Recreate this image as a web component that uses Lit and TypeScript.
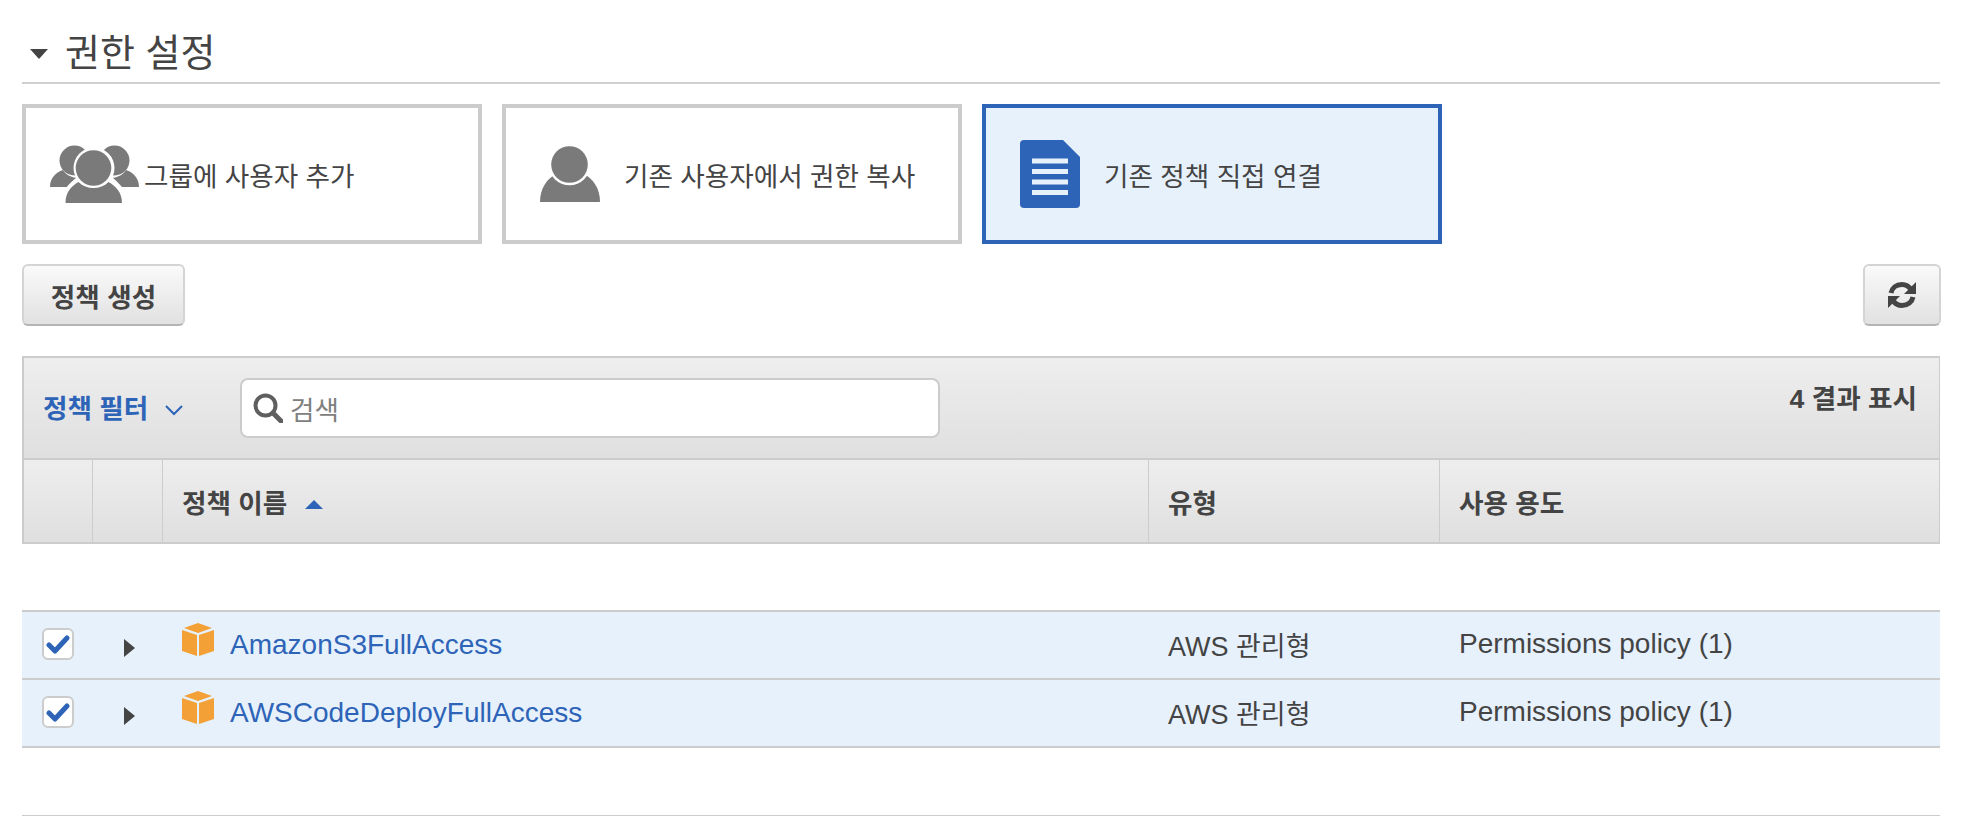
import { LitElement, html, css, svg } from "lit";
import { customElement } from "lit/decorators.js";

const groupIcon = html`<svg viewBox="0 0 90 58" width="90" height="58">
  <g fill="#7a7a7a">
    <circle cx="24.5" cy="15.5" r="15"/><circle cx="64.5" cy="15.5" r="15"/>
    <path d="M0 42c0-9 6-15 13-17 3 5 8 7 13 8-4 3-9 9-9 9z"/>
    <path d="M89 42c0-9-6-15-13-17-3 5-8 7-13 8 4 3 9 9 9 9z"/>
  </g>
  <circle cx="44" cy="23" r="20.5" fill="#fff"/>
  <path d="M12 58c0-12 6-20 16-25 8 9 24 9 32 0 10 5 16 13 16 25z" fill="#fff"/>
  <circle cx="43.5" cy="23" r="17.8" fill="#7a7a7a"/>
  <path d="M15.5 58c0-11 6-17 13-21 8 8 22 8 30 0 7 4 13.500 10 13.500 21z" fill="#7a7a7a"/>
</svg>`;

const userIcon = html`<svg viewBox="0 0 60 56" width="60" height="56">
  <path d="M0 56c0-14 7-23 16-28h28c9 5 16 14 16 28z" fill="#7a7a7a"/>
  <circle cx="29.500" cy="18.500" r="20.800" fill="#fff"/>
  <circle cx="29.500" cy="18.500" r="18.300" fill="#7a7a7a"/>
</svg>`;

const docIcon = html`<svg viewBox="0 0 60 68" width="60" height="68">
  <path d="M4 0h39l17 17v47a4 4 0 0 1-4 4H4a4 4 0 0 1-4-4V4a4 4 0 0 1 4-4z" fill="#2e64b7"/>
  <g fill="#e7f1fc">
    <rect x="12" y="18.500" width="36" height="5"/><rect x="12" y="29" width="36" height="5"/>
    <rect x="12" y="39.500" width="36" height="5"/><rect x="12" y="50" width="36" height="5"/>
  </g>
</svg>`;

const cube = svg`<g fill="#f3a037">
  <path d="M16 0l14 5-14 5L2 5z"/>
  <path d="M0 7l15 5v21L0 28z"/>
  <path d="M32 7l-15 5v21l15-5z"/>
</g>`;

const rows = [
  { name: "AmazonS3FullAccess", type: "AWS 관리형", use: "Permissions policy (1)" },
  { name: "AWSCodeDeployFullAccess", type: "AWS 관리형", use: "Permissions policy (1)" },
];

@customElement("app-root")
export class AppRoot extends LitElement {
  static styles = css`
    :host {
      display: block;
      height: 830px;
      box-sizing: border-box;
      padding: 0 24px 0 22px;
      background: #fff;
      color: #444;
      font-family: "Liberation Sans", "Noto Sans CJK KR", sans-serif;
      overflow: hidden;
    }
    .heading {
      height: 84px;
      box-sizing: border-box;
      border-bottom: 2px solid #d0d0d0;
      display: flex;
      align-items: center;
      gap: 17px;
      padding: 16px 0 0 8px;
      margin-bottom: 20px;
      font-size: 38px;
    }
    .caret {
      width: 0;
      height: 0;
      border: 9.5px solid transparent;
      border-top: 10px solid #444;
      border-bottom: 0;
      margin-top: 10px;
    }
    .cards { display: flex; gap: 20px; margin-bottom: 20px; }
    .card {
      width: 460px;
      height: 140px;
      box-sizing: border-box;
      border: 4px solid #ccc;
      display: flex;
      align-items: center;
      font-size: 26.6px;
      color: #444;
    }
    .card.sel { border-color: #2e64b7; background: #e7f1fc; }
    .ico { display: flex; flex: none; width: 118px; box-sizing: border-box; padding-left: 34px; }
    .card.a .ico { padding-left: 24px; }
    .toolbar { display: flex; justify-content: space-between; margin-bottom: 30px; margin-right: -1px; }
    .btn {
      height: 62px;
      box-sizing: border-box;
      border: 2px solid #d4d4d4;
      border-bottom-color: #b4b4b4;
      border-radius: 6px;
      background: linear-gradient(#fafafa, #e1e1e1);
      display: flex;
      align-items: center;
      justify-content: center;
      font-size: 26.6px;
      font-weight: 700;
      color: #444;
    }
    .btn.create { width: 163px; }
    .btn.refresh { width: 78px; }
    .table { border: 2px solid #ccc; border-bottom: 0; border-right-width: 1px; }
    .filter {
      height: 102px;
      box-sizing: border-box;
      border-bottom: 2px solid #ccc;
      background: linear-gradient(#eee, #dfdfdf);
      display: flex;
    }
    .filter-label {
      color: #2e64b7;
      font-size: 26.6px;
      font-weight: 700;
      margin: 30px 0 0 19px;
      display: flex;
      gap: 17px;
      width: 197px;
      height: 36px;
      align-items: center;
    }
    .filter-label svg { margin-top: 8px; }
    .search {
      width: 700px;
      height: 60px;
      margin-top: 20px;
      box-sizing: border-box;
      background: #fff;
      border: 2px solid #ccc;
      border-radius: 8px;
      display: flex;
      align-items: center;
      gap: 7px;
      padding-left: 11px;
      font-size: 26.6px;
      color: #808080;
    }
    .count {
      margin-left: auto;
      margin-right: 22px;
      margin-top: 26px;
      font-size: 26.6px;
      font-weight: 700;
      line-height: 30px;
    }
    .head, .row {
      display: grid;
      grid-template-columns: 69px 70px 986px 291px 1fr;
    }
    .head {
      height: 84px;
      box-sizing: border-box;
      border-bottom: 2px solid #ccc;
      background: linear-gradient(#eee, #dfdfdf);
      font-size: 26.6px;
      font-weight: 700;
    }
    .head > div {
      border-right: 1px solid #ccc;
      display: flex;
      align-items: center;
      padding-left: 19px;
      gap: 18px;
    }
    .head > div:last-child { border-right: 0; }
    .sort {
      width: 0; height: 0;
      border: 9px solid transparent;
      border-bottom: 9px solid #2e64b7;
      border-top: 0;
      margin-top: 6px;
    }
    .gap { height: 66px; }
    .rows { border-top: 2px solid #ccc; }
    .row {
      height: 68px;
      box-sizing: border-box;
      border-bottom: 2px solid #ccc;
      background: #e7f1fc;
      padding-left: 2px;
      font-size: 28px;
      align-items: center;
      color: #444;
    }
    .c-check { padding-left: 18px; display: flex; }
    .check {
      width: 32px; height: 32px;
      box-sizing: border-box;
      border: 2px solid #ccc;
      border-radius: 6px;
      background: #fff;
      display: flex; align-items: center; justify-content: center;
      margin-top: -2px;
    }
    .c-arrow { display: flex; padding-left: 31px; padding-top: 5px; }
    .tri {
      width: 0; height: 0;
      border-left: 11px solid #444;
      border-top: 9.5px solid transparent;
      border-bottom: 9.5px solid transparent;
    }
    .c-name { display: flex; align-items: center; gap: 16px; padding-left: 19px; }
    .c-name svg { margin-top: -11px; flex: none; }
    .link { color: #2e64b7; }
    .c-type { padding-left: 19px; margin-top: -2px; font-size: 27px; }
    .c-use { padding-left: 19px; margin-top: -2px; }
    .foot { height: 68px; border-bottom: 1px solid #ccc; box-sizing: border-box; }
  `;

  render() {
    return html`
      <div class="heading"><span class="caret"></span><span>권한 설정</span></div>
      <div class="cards">
        <div class="card a"><div class="ico">${groupIcon}</div><div>그룹에 사용자 추가</div></div>
        <div class="card b"><div class="ico">${userIcon}</div><div>기존 사용자에서 권한 복사</div></div>
        <div class="card c sel"><div class="ico">${docIcon}</div><div>기존 정책 직접 연결</div></div>
      </div>
      <div class="toolbar">
        <div class="btn create">정책 생성</div>
        <div class="btn refresh">
          <svg viewBox="0 0 28 28" width="28" height="28" fill="none" stroke="#444" stroke-width="5">
            <path d="M3 12c1-5 5-8.500 11-8.500 4 0 7 2 9 5"/>
            <path d="M28 1v12H16z" fill="#444" stroke="none"/>
            <path d="M25 16c-1 5-5 8.500-11 8.500-4 0-7-2-9-5"/>
            <path d="M0 27V15h12z" fill="#444" stroke="none"/>
          </svg>
        </div>
      </div>
      <div class="table">
        <div class="filter">
          <div class="filter-label">
            <span>정책 필터</span>
            <svg viewBox="0 0 18 11" width="18" height="11" fill="none" stroke="#2e64b7" stroke-width="2"><path d="M1 1l8 8 8-8"/></svg>
          </div>
          <div class="search">
            <svg viewBox="0 0 30 30" width="30" height="30" fill="none" stroke="#5f5f5f"><circle cx="12.500" cy="12.500" r="10" stroke-width="4"/><path d="M20 20l8 8" stroke-width="5" stroke-linecap="round"/></svg>
            <span>검색</span>
          </div>
          <div class="count">4 결과 표시</div>
        </div>
        <div class="head">
          <div></div><div></div>
          <div>정책 이름 <span class="sort"></span></div>
          <div>유형</div>
          <div>사용 용도</div>
        </div>
      </div>
      <div class="gap"></div>
      <div class="rows">
        ${rows.map(
          (r) => html`<div class="row">
            <div class="c-check"><span class="check">
              <svg viewBox="0 0 24 20" width="24" height="20"><path d="M3 11l6 6L21 4" fill="none" stroke="#2e64b7" stroke-width="5" stroke-linejoin="round" stroke-linecap="round"/></svg>
            </span></div>
            <div class="c-arrow"><span class="tri"></span></div>
            <div class="c-name"><svg viewBox="0 0 32 33" width="32" height="33">${cube}</svg><span class="link">${r.name}</span></div>
            <div class="c-type">${r.type}</div>
            <div class="c-use">${r.use}</div>
          </div>`
        )}
      </div>
      <div class="foot"></div>
    `;
  }
}
